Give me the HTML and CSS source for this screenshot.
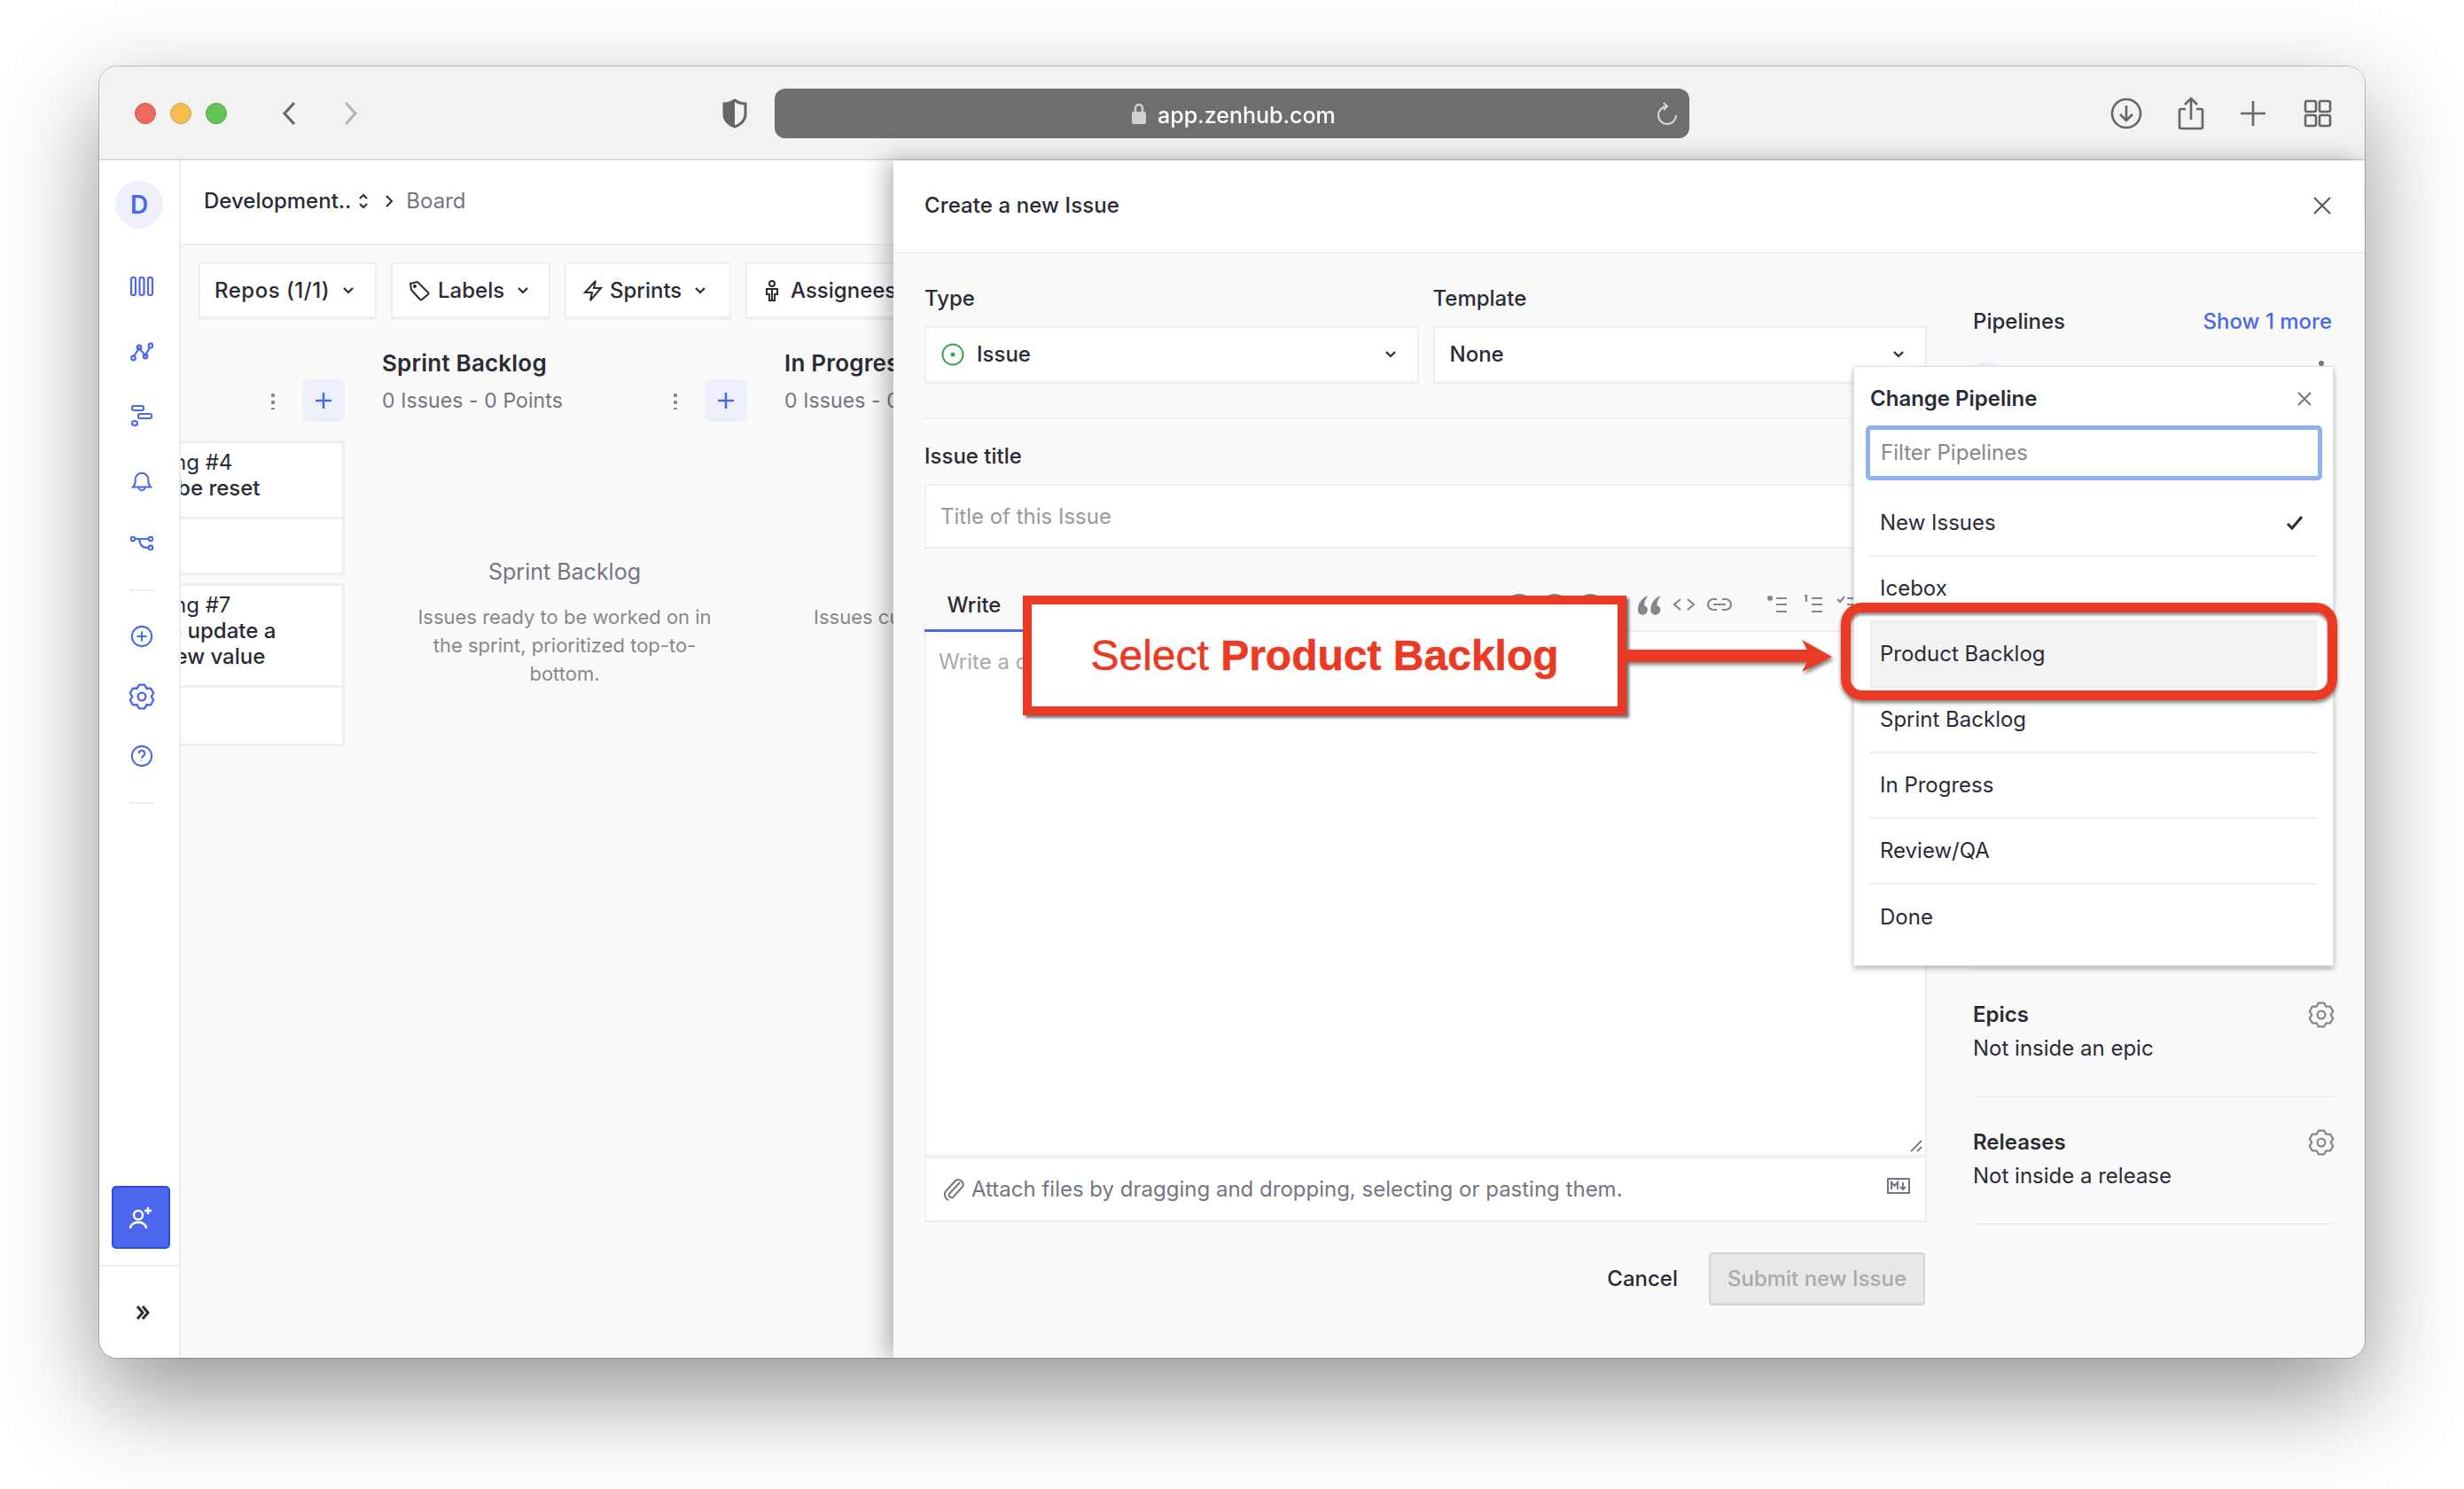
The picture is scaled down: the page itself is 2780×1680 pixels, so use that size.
FILE: index.html
```html
<!DOCTYPE html>
<html lang="en">

<head>
    <meta charset="UTF-8">
    <meta name="viewport" content="width=device-width, initial-scale=1.0">
    <title>Create a new Issue - ZenHub</title>
    <link rel="stylesheet" href="styles.css">
</head>

<body>
    <div class="window">
        <header class="titlebar">
            <span class="light light-red"></span>
            <span class="light light-yellow"></span>
            <span class="light light-green"></span>
            <svg class="nav-back" width="18" height="28" viewBox="0 0 18 28"><path d="M15 2 L4 14 L15 26" /></svg>
            <svg class="nav-forward" width="18" height="28" viewBox="0 0 18 28"><path d="M3 2 L14 14 L3 26" /></svg>
            <svg class="shield" width="28" height="34" viewBox="0 0 28 34">
                <path class="shield-fill" d="M14 2 C10 5 6 6 2 6 V18 C2 25 8 30 14 32 Z" />
                <path class="shield-line" d="M14 2 C10 5 6 6 2 6 V18 C2 25 8 30 14 32 C20 30 26 25 26 18 V6 C22 6 18 5 14 2 Z" />
            </svg>
            <div class="urlbar">
                <svg class="lock" width="16" height="24" viewBox="0 0 16 24">
                    <path d="M4 11 V6 a4 4 0 0 1 8 0 V11" />
                    <rect x="0" y="10" width="16" height="14" rx="2" />
                </svg>
                <span class="url-text">app.zenhub.com</span>
                <svg class="reload" width="26" height="28" viewBox="0 0 26 28">
                    <path d="M13 6 A10 10 0 1 0 23 16" />
                    <path d="M9 2 L13 6 L9 10" />
                </svg>
            </div>
            <div class="toolbar-right">
                <svg width="36" height="36" viewBox="0 0 36 36"><circle cx="18" cy="18" r="16" /><path d="M18 9 V26 M11 19 L18 26 L25 19" /></svg>
                <svg width="30" height="38" viewBox="0 0 30 38"><path d="M9 14 H4 a2 2 0 0 0 -2 2 V34 a2 2 0 0 0 2 2 H26 a2 2 0 0 0 2 -2 V16 a2 2 0 0 0 -2 -2 H21 M15 26 V2 M8 9 L15 2 L22 9" /></svg>
                <svg width="30" height="30" viewBox="0 0 30 30"><path d="M15 1 V29 M1 15 H29" /></svg>
                <svg width="32" height="32" viewBox="0 0 32 32"><rect x="2" y="2" width="12" height="12" rx="2" /><rect x="18" y="2" width="12" height="12" rx="2" /><rect x="2" y="18" width="12" height="12" rx="2" /><rect x="18" y="18" width="12" height="12" rx="2" /></svg>
            </div>
        </header>

        <div class="app">
            <nav class="sidebar">
                <div class="avatar">D</div>
                <svg class="side-icon icon-board" width="28" height="22" viewBox="0 0 28 22"><rect x="2" y="1" width="5" height="20" rx="2" /><rect x="11.5" y="1" width="5" height="20" rx="2" /><rect x="21" y="1" width="5" height="20" rx="2" /></svg>
                <svg class="side-icon icon-graph" width="26" height="22" viewBox="0 0 26 22"><path d="M4 16 L10 7 L17 15 L22 6" /><circle cx="3.5" cy="18" r="2.3" /><circle cx="10" cy="6" r="2.3" /><circle cx="17" cy="16" r="2.3" /><circle cx="23" cy="4" r="2.3" /></svg>
                <svg class="side-icon icon-tree" width="24" height="24" viewBox="0 0 24 24"><rect x="1" y="1" width="13" height="5" rx="2" /><rect x="8" y="10" width="15" height="5" rx="2" /><rect x="1" y="18" width="6" height="5" rx="2.5" /></svg>
                <svg class="side-icon icon-bell" width="24" height="24" viewBox="0 0 26 26"><path d="M2 19 C5 16 5 14 5 10 a8 8 0 0 1 16 0 C21 14 21 16 24 19 Z M9 19 a4 4 0 0 0 8 0" /></svg>
                <svg class="side-icon icon-branch" width="26" height="16" viewBox="0 0 26 16"><circle cx="3" cy="3" r="2.3" /><circle cx="23" cy="3" r="2.3" /><circle cx="23" cy="13" r="2.3" /><path d="M5.500 3 H20.500 M10 3 C11 10 13 13 20.500 13" /></svg>
                <span class="side-rule rule-tools"></span>
                <svg class="side-icon icon-plus" width="26" height="26" viewBox="0 0 28 28"><circle cx="14" cy="14" r="12" /><path d="M14 8 V20 M8 14 H20" /></svg>
                <svg class="side-icon icon-gear" width="30" height="30" viewBox="0 0 24 24"><polygon points="9.53,1.28 14.47,1.28 16.3,4.55 20.04,4.5 22.52,8.79 20.6,12 22.52,15.21 20.04,19.5 16.3,19.45 14.47,22.72 9.53,22.72 7.7,19.45 3.96,19.5 1.48,15.21 3.4,12 1.48,8.79 3.96,4.5 7.7,4.55" /><circle cx="12" cy="12" r="3.5" /></svg>
                <svg class="side-icon icon-help" width="26" height="26" viewBox="0 0 28 28"><circle cx="14" cy="14" r="12" /><path d="M10.500 11 a3.500 3.500 0 1 1 5 3 C14.500 15 14 15.500 14 17 M14 20 V20.500" /></svg>
                <span class="side-rule rule-help"></span>
                <div class="invite">
                    <svg width="28" height="28" viewBox="0 0 28 28"><circle cx="11" cy="11" r="5" /><path d="M2 26 a9 7 0 0 1 18 0 M18 6 H26 M22 2 V10" /></svg>
                </div>
                <div class="expand">
                    <svg width="16" height="16" viewBox="0 0 16 16"><path d="M2 1 L8 8 L2 15 M8 1 L14 8 L8 15" /></svg>
                </div>
            </nav>

            <main class="board">
                <div class="crumbs">
                    <span class="crumb-main">Development..</span>
                    <svg class="updown" width="12" height="18" viewBox="0 0 12 18"><path d="M2 6 L6 2 L10 6 M2 12 L6 16 L10 12" /></svg>
                    <svg class="crumb-sep" width="10" height="16" viewBox="0 0 10 16"><path d="M2 2 L8 8 L2 14" /></svg>
                    <span class="crumb-page">Board</span>
                </div>
                <div class="filters">
                    <button class="filter filter-repos"><span class="repos-label">Repos (1/1)</span><svg class="chev" width="12" height="8" viewBox="0 0 12 8"><path d="M1 1 L6 6 L11 1" /></svg></button>
                    <button class="filter filter-labels">
                        <svg class="filter-icon" width="24" height="24" viewBox="0 0 24 24"><path d="M2 4 L10 2 L22 14 Q23 15 22 16 L15 22 Q14 23 13 22 L3 11 Z" /><circle cx="7" cy="7" r="1" /></svg>
                        Labels<svg class="chev" width="12" height="8" viewBox="0 0 12 8"><path d="M1 1 L6 6 L11 1" /></svg>
                    </button>
                    <button class="filter filter-sprints">
                        <svg class="filter-icon" width="24" height="26" viewBox="0 0 24 26"><path d="M15 2 L3 15 H11 L9 24 L21 10 H13 Z" /></svg>
                        Sprints<svg class="chev" width="12" height="8" viewBox="0 0 12 8"><path d="M1 1 L6 6 L11 1" /></svg>
                    </button>
                    <button class="filter filter-assignees">
                        <svg class="filter-icon" width="16" height="24" viewBox="0 0 16 24"><circle cx="8" cy="4" r="3" /><path d="M2 10 H14 V16 H11 V23 H5 V16 H2 Z M8 10 V23" /></svg>
                        Assignees
                    </button>
                </div>
                <div class="columns">
                    <section class="column">
                        <div class="col-title">Product Backlog</div>
                        <div class="col-meta">
                            <span class="col-count">2 Issues - 0 Points</span>
                            <span class="dots"></span>
                            <span class="add-btn"><svg width="20" height="20" viewBox="0 0 20 20"><path d="M10 1 V19 M1 10 H19" /></svg></span>
                        </div>
                        <article class="card">
                            <div class="card-body">
                                <p class="card-repo">Typing #4</p>
                                <p>Can be reset</p>
                            </div>
                            <div class="card-foot"></div>
                        </article>
                        <article class="card">
                            <div class="card-body">
                                <p class="card-repo">Typing #7</p>
                                <p>Fit to update a<br>fix new value</p>
                            </div>
                            <div class="card-foot"></div>
                        </article>
                    </section>
                    <section class="column">
                        <div class="col-title">Sprint Backlog</div>
                        <div class="col-meta">
                            <span class="col-count">0 Issues - 0 Points</span>
                            <span class="dots"></span>
                            <span class="add-btn"><svg width="20" height="20" viewBox="0 0 20 20"><path d="M10 1 V19 M1 10 H19" /></svg></span>
                        </div>
                        <div class="empty">
                            <h3 class="empty-title">Sprint Backlog</h3>
                            <p class="empty-text">Issues ready to be worked on in the sprint, prioritized top-to-bottom.</p>
                        </div>
                    </section>
                    <section class="column">
                        <div class="col-title">In Progress</div>
                        <div class="col-meta">
                            <span class="col-count">0 Issues - 0 Points</span>
                            <span class="dots"></span>
                            <span class="add-btn"><svg width="20" height="20" viewBox="0 0 20 20"><path d="M10 1 V19 M1 10 H19" /></svg></span>
                        </div>
                        <div class="empty">
                            <h3 class="empty-title">In Progress</h3>
                            <p class="empty-text">Issues currently being worked on by the team</p>
                        </div>
                    </section>
                </div>
            </main>

            <div class="modal">
                <div class="modal-head">
                    <span>Create a new Issue</span>
                    <svg width="22" height="22" viewBox="0 0 22 22"><path d="M2 2 L20 20 M20 2 L2 20" /></svg>
                </div>
                <div class="modal-body">
                    <form class="issue-form">
                        <div class="field-row">
                            <div class="field">
                                <label class="field-label">Type</label>
                                <div class="select">
                                    <svg class="issue-icon" width="26" height="26" viewBox="0 0 26 26"><circle class="issue-ring" cx="13" cy="13" r="11.500" /><circle class="issue-dot" cx="13" cy="13" r="2.500" /></svg>
                                    <span class="select-value">Issue</span>
                                    <svg class="chev" width="12" height="8" viewBox="0 0 12 8"><path d="M1 1 L6 6 L11 1" /></svg>
                                </div>
                            </div>
                            <div class="field">
                                <label class="field-label">Template</label>
                                <div class="select">
                                    <span class="select-value">None</span>
                                    <svg class="chev" width="12" height="8" viewBox="0 0 12 8"><path d="M1 1 L6 6 L11 1" /></svg>
                                </div>
                            </div>
                        </div>
                        <hr class="rule">
                        <label class="field-label">Issue title</label>
                        <div class="title-input">Title of this Issue</div>
                        <div class="tabs">
                            <span class="tab-write">Write</span>
                            <div class="md-tools">
                                <span class="tool-blob"></span>
                                <span class="tool-blob"></span>
                                <span class="tool-blob tool-end"></span>
                                <svg class="tool" width="30" height="24" viewBox="2 1 24 20"><path class="tool-solid" d="M12 3 C7 6 4 10 4 16 a4.500 4.500 0 1 0 6 -4 C10 8 11 6 13 4 Z M24 3 C19 6 16 10 16 16 a4.500 4.500 0 1 0 6 -4 C22 8 23 6 25 4 Z" /></svg>
                                <svg class="tool" width="30" height="24" viewBox="0 0 30 24"><path d="M11 6 L4 12 L11 18 M19 6 L26 12 L19 18" /></svg>
                                <svg class="tool tool-end" width="30" height="24" viewBox="0 0 30 24"><path d="M12 6 H8 a6 6 0 0 0 0 12 H12 M18 6 H22 a6 6 0 0 1 0 12 H18 M8 12 H22" /></svg>
                                <svg class="tool" width="30" height="24" viewBox="0 0 30 24"><circle class="tool-solid" cx="6" cy="5" r="3" /><path d="M13 5 H25 M13 12 H25 M13 20 H25" /></svg>
                                <svg class="tool" width="30" height="24" viewBox="0 0 30 24"><path d="M5 3 L7 2 V9 M13 5 H25 M13 12 H25 M13 20 H25" /></svg>
                                <svg class="tool" width="30" height="24" viewBox="0 0 30 24"><path d="M2 6 L5 9 L10 3 M13 5 H25 M13 12 H25 M13 20 H25" /></svg>
                            </div>
                        </div>
                        <div class="editor">
                            <span class="editor-hint">Write a description</span>
                            <svg class="resize-grip" width="14" height="14" viewBox="0 0 14 14"><path d="M1 13 L13 1 M8 13 L13 8" /></svg>
                        </div>
                        <div class="attach">
                            <svg class="clip" width="26" height="26" viewBox="0 0 26 26"><path d="M20 5 L8 18 a3 3 0 0 0 4 4 L23 10 a5.500 5.500 0 0 0 -8 -7 L4 15 a7 7 0 0 0 3 10" /></svg>
                            <span class="attach-text">Attach files by dragging and dropping, selecting or pasting them.</span>
                            <svg class="md-mark" width="26" height="18" viewBox="0 0 26 18"><rect x="1" y="1" width="24" height="16" /><path d="M5 13 V5 L8.500 9 L12 5 V13 M18 5 V12 M15 10 L18 13 L21 10" /></svg>
                        </div>
                        <div class="form-actions">
                            <span class="cancel">Cancel</span>
                            <button class="submit" type="button">Submit new Issue</button>
                        </div>
                    </form>

                    <aside class="details">
                        <section class="pipelines">
                            <div class="pipelines-head">
                                <span class="detail-title">Pipelines</span>
                                <span class="show-more">Show 1 more</span>
                            </div>
                            <div class="pipeline-row">
                                <span class="pipeline-avatar"></span>
                                <span class="pipeline-dot"></span>
                            </div>
                        </section>
                        <section class="detail-block">
                            <div class="detail-head">
                                <span class="detail-title">Epics</span>
                                <svg class="gear" width="30" height="30" viewBox="0 0 24 24"><polygon points="9.53,1.28 14.47,1.28 16.3,4.55 20.04,4.5 22.52,8.79 20.6,12 22.52,15.21 20.04,19.5 16.3,19.45 14.47,22.72 9.53,22.72 7.7,19.45 3.96,19.5 1.48,15.21 3.4,12 1.48,8.79 3.96,4.5 7.7,4.55" /><circle cx="12" cy="12" r="3.5" /></svg>
                            </div>
                            <p class="detail-text">Not inside an epic</p>
                        </section>
                        <section class="detail-block">
                            <div class="detail-head">
                                <span class="detail-title">Releases</span>
                                <svg class="gear" width="30" height="30" viewBox="0 0 24 24"><polygon points="9.53,1.28 14.47,1.28 16.3,4.55 20.04,4.5 22.52,8.79 20.6,12 22.52,15.21 20.04,19.5 16.3,19.45 14.47,22.72 9.53,22.72 7.7,19.45 3.96,19.5 1.48,15.21 3.4,12 1.48,8.79 3.96,4.5 7.7,4.55" /><circle cx="12" cy="12" r="3.5" /></svg>
                            </div>
                            <p class="detail-text">Not inside a release</p>
                        </section>
                    </aside>
                </div>

                <div class="dropdown">
                    <div class="dropdown-head">
                        <span>Change Pipeline</span>
                        <svg width="16" height="16" viewBox="0 0 16 16"><path d="M1 1 L15 15 M15 1 L1 15" /></svg>
                    </div>
                    <div class="filter-input">Filter Pipelines</div>
                    <ul class="pipeline-list">
                        <li class="pipeline-item">New Issues
                            <svg width="20" height="18" viewBox="0 0 20 18"><path d="M2 10 L7 15 L18 2" /></svg>
                        </li>
                        <li class="pipeline-item">Icebox</li>
                        <li class="pipeline-item pipeline-active">Product Backlog</li>
                        <li class="pipeline-item">Sprint Backlog</li>
                        <li class="pipeline-item">In Progress</li>
                        <li class="pipeline-item">Review/QA</li>
                        <li class="pipeline-item pipeline-last">Done</li>
                    </ul>
                </div>

                <!-- red annotations on top of the screenshot -->
                <div class="note"><span>Select <b>Product Backlog</b></span></div>
                <svg class="note-arrow" width="236" height="40" viewBox="0 0 236 40"><path d="M0 13 H204 L198 2 L232 21 L198 38 L204 27 H0 Z" /></svg>
                <div class="note-ring"></div>
            </div>
        </div>
    </div>
</body>

</html>
```
FILE: styles.css
```css
* {
    box-sizing: border-box;
}

html,
body {
    margin: 0;
    background: #fff;
}

body {
    height: 1680px;
    padding: 75px 112px 148px;
    overflow: hidden;
    font-family: Inter, "Noto Sans", sans-serif;
    font-size: 24px;
    line-height: 30px;
    color: #2a2b36;
}

p,
h3,
ul {
    margin: 0;
    padding: 0;
}

svg {
    display: block;
    flex: none;
    fill: none;
    stroke: currentColor;
}

/* window */
.window {
    display: flex;
    flex-direction: column;
    height: 1457px;
    border-radius: 20px;
    overflow: hidden;
    box-shadow: 0 0 0 1px rgba(0, 0, 0, 0.22);
    filter: drop-shadow(0 42px 55px rgba(0, 0, 0, 0.42));
}

.titlebar {
    display: flex;
    align-items: center;
    height: 106px;
    padding: 2px 37px 0 40px;
    background: #f2f2f2;
    border-bottom: 2px solid #d9d9d9;
    color: #666;
}

.light {
    width: 24px;
    height: 24px;
    margin-right: 16px;
    border-radius: 50%;
}

.light-red {
    background: #ee6a5f;
    border: 1px solid #d5544a;
}

.light-yellow {
    background: #f5bd4f;
    border: 1px solid #d6a13e;
}

.light-green {
    background: #61c454;
    border: 1px solid #52a845;
}

.nav-back {
    margin-left: 45px;
    stroke-width: 3;
}

.nav-forward {
    margin-left: 52px;
    stroke-width: 3;
    color: #b3b3b3;
}

.shield {
    margin-left: 410px;
}

.shield-fill {
    fill: #666;
    stroke: none;
}

.shield-line {
    stroke: #666;
    stroke-width: 3;
}

.urlbar {
    display: flex;
    align-items: center;
    width: 1032px;
    height: 56px;
    margin-left: 31px;
    padding: 0 12px 0 403px;
    border-radius: 12px;
    background: #6e6e6e;
    color: #fff;
}

.lock {
    fill: #d0d0d0;
    stroke: none;
}

.lock path {
    fill: none;
    stroke: #d0d0d0;
    stroke-width: 2.5;
}

.url-text {
    margin: 4px 0 0 13px;
    font-size: 25px;
    font-weight: 500;
}

.reload {
    margin-left: auto;
    stroke: #d8d8d8;
    stroke-width: 2;
}

.toolbar-right {
    display: flex;
    align-items: center;
    gap: 40px;
    margin-left: auto;
}

.toolbar-right svg {
    stroke-width: 2.6;
}

.toolbar-right svg:last-child {
    margin-left: 2px;
}

/* app layout */
.app {
    display: flex;
    flex: 1;
    position: relative;
    min-height: 0;
    background: #fff;
}

.sidebar {
    display: flex;
    flex-direction: column;
    align-items: center;
    flex: none;
    width: 92px;
    border-right: 2px solid #ededed;
    color: #4a67ee;
}

.avatar {
    width: 54px;
    height: 54px;
    margin-top: 23px;
    border-radius: 50%;
    background: #eef0fd;
    font-size: 28px;
    font-weight: 600;
    line-height: 54px;
    text-align: center;
}

.side-icon {
    margin-left: 6px;
    stroke-width: 2.2;
}

.icon-board {
    margin-top: 54px;
}

.icon-graph {
    margin-top: 52px;
}

.icon-tree {
    margin-top: 49px;
}

.icon-bell {
    margin-top: 51px;
}

.icon-branch {
    margin-top: 49px;
}

.icon-plus {
    margin-top: 38px;
}

.icon-gear {
    margin-top: 40px;
    stroke-width: 1.9;
}

.icon-help {
    margin-top: 39px;
}

.side-rule {
    width: 28px;
    height: 2px;
    margin-left: 5px;
    background: #ededed;
}

.rule-tools {
    margin-top: 44px;
}

.rule-help {
    margin-top: 39px;
}

.invite {
    display: flex;
    align-items: center;
    justify-content: center;
    width: 66px;
    height: 71px;
    margin: auto 0 0 4px;
    border: 2px solid #2f4bd8;
    border-radius: 5px;
    background: #4a67ee;
    color: #fff;
}

.invite svg {
    stroke-width: 2.5;
}

.expand {
    display: flex;
    align-items: center;
    justify-content: center;
    align-self: stretch;
    height: 105px;
    margin-top: 18px;
    border-top: 2px solid #ededed;
    color: #2a2b36;
}

.expand svg {
    margin-left: 7px;
    stroke-width: 3;
}

/* board behind the modal */
.board {
    flex: none;
    width: 804px;
    overflow: hidden;
    background: #fafafa;
}

.crumbs {
    display: flex;
    align-items: center;
    height: 96px;
    padding: 0 0 2px 26px;
    border-bottom: 2px solid #eee;
    background: #fff;
    font-weight: 500;
}

.crumb-main {
    white-space: nowrap;
}

.updown {
    margin-left: 8px;
    stroke-width: 2;
}

.crumb-sep {
    margin-left: 18px;
    stroke-width: 2;
}

.crumb-page {
    margin-left: 14px;
    color: #757580;
    font-weight: 400;
}

.filters {
    display: flex;
    gap: 16px;
    padding: 19px 0 0 20px;
}

.filter {
    display: flex;
    align-items: center;
    flex: none;
    height: 65px;
    padding: 1px 0 0 16px;
    border: 2px solid #eee;
    border-bottom-width: 4px;
    border-radius: 3px;
    background: #fff;
    color: #2a2b36;
    font: 500 24px/30px Inter, "Noto Sans", sans-serif;
    white-space: nowrap;
}

.repos-label {
    letter-spacing: 0.5px;
}

.filter-repos {
    width: 201px;
}

.filter-labels {
    width: 180px;
    padding-left: 18px;
}

.filter-sprints {
    width: 188px;
    padding-left: 18px;
}

.filter-assignees {
    width: 240px;
    padding-left: 20px;
}

.filter-icon {
    margin-right: 7px;
    stroke-width: 2;
}

.filter-labels .filter-icon {
    margin-right: 9px;
}

.filter-assignees .filter-icon {
    margin-right: 13px;
}

.filter .chev {
    margin-left: 15px;
}

.chev {
    stroke-width: 2.2;
}

.columns {
    display: flex;
    gap: 42px;
    margin-left: -227px;
    padding-top: 34px;
}

.column {
    flex: none;
    width: 412px;
}

.col-title {
    font-size: 26px;
    font-weight: 600;
    letter-spacing: 0.2px;
    white-space: nowrap;
}

.col-meta {
    display: flex;
    align-items: center;
    height: 48px;
    margin-top: 3px;
}

.col-count {
    color: #757580;
    font-size: 23px;
    letter-spacing: 0.1px;
}

.dots {
    width: 4px;
    height: 20px;
    margin-left: auto;
    margin-right: 31px;
    background: radial-gradient(circle, #888 2px, transparent 2.5px) 0 0 / 4px 8px;
}

.add-btn {
    display: flex;
    align-items: center;
    justify-content: center;
    width: 48px;
    height: 48px;
    border-radius: 6px;
    background: #eef0fd;
    color: #4a67ee;
}

.add-btn svg {
    stroke-width: 2.5;
}

.card {
    margin: 21px 0 -12px;
    border: 3px solid #eee;
    border-radius: 3px;
    background: #fff;
}

.card-body {
    padding: 7px 10px 18px 168px;
    border-bottom: 3px solid #eee;
    font-weight: 500;
    line-height: 29px;
    white-space: nowrap;
}

.card-repo {
    font-weight: 400;
}

.card-foot {
    height: 60px;
}

.card + .card .card-foot {
    height: 63px;
}

.empty {
    margin-top: 154px;
    text-align: center;
    color: #757580;
}

.empty-title {
    font-size: 25px;
    font-weight: 400;
}

.empty-text {
    width: 350px;
    margin: 20px auto 0;
    color: #888;
    font-size: 22px;
    line-height: 32px;
}

/* modal */
.modal {
    display: flex;
    flex-direction: column;
    flex: 1;
    position: relative;
    min-width: 0;
    background: #fafafa;
    box-shadow: -8px 0 24px rgba(0, 0, 0, 0.28);
}

.modal-head {
    display: flex;
    align-items: center;
    justify-content: space-between;
    flex: none;
    height: 105px;
    padding: 0 37px 1px 35px;
    border-bottom: 2px solid #eee;
    background: #fff;
    font-weight: 500;
    letter-spacing: 0.1px;
}

.modal-head svg {
    stroke-width: 2;
    color: #555;
}

.modal-body {
    display: flex;
    flex: 1;
    gap: 52px;
    padding: 0 34px 0 35px;
}

.issue-form {
    flex: none;
    width: 1131px;
    padding-top: 36px;
}

.field-row {
    display: flex;
    gap: 16px;
}

.field {
    flex: 1;
}

.field-label {
    display: block;
    margin-bottom: 16px;
    font-weight: 500;
}

.select {
    display: flex;
    align-items: center;
    height: 66px;
    padding: 0 24px 0 17px;
    border: 2px solid #eee;
    border-bottom-width: 4px;
    background: #fff;
}

.select .chev {
    margin-left: auto;
}

.select-value {
    font-weight: 500;
}

.issue-icon {
    margin-right: 14px;
}

.issue-ring {
    stroke: #3fa34d;
    stroke-width: 2;
}

.issue-dot {
    fill: #3fa34d;
    stroke: none;
}

.rule {
    height: 2px;
    margin: 37px 0 27px;
    border: 0;
    background: #eee;
}

.title-input {
    display: flex;
    align-items: center;
    height: 73px;
    padding-left: 16px;
    border: 2px solid #eee;
    background: #fff;
    color: #999;
}

.tabs {
    display: flex;
    align-items: flex-end;
    height: 58px;
    margin-top: 36px;
    border-bottom: 2px solid #eee;
}

.tab-write {
    width: 112px;
    height: 58px;
    margin-bottom: -2px;
    padding-top: 13px;
    border-bottom: 3px solid #4a67ee;
    font-weight: 500;
    text-align: center;
}

.md-tools {
    display: flex;
    align-self: center;
    gap: 10px;
    margin-left: auto;
    margin-top: -2px;
    padding-right: 73px;
    color: #85858f;
}

.tool {
    stroke-width: 2.2;
}

.tool-solid {
    fill: #85858f;
    stroke: none;
}

.tool-end {
    margin-right: 26px;
}

.tool-blob {
    width: 30px;
    height: 24px;
    border-radius: 50%;
    background: #85858f;
}

.editor {
    display: flex;
    height: 592px;
    position: relative;
    padding: 19px 14px;
    border: 2px solid #eee;
    border-top: 0;
    background: #fff;
    color: #aaa;
}

.resize-grip {
    position: absolute;
    right: 3px;
    bottom: 3px;
    color: #555;
    stroke-width: 1.5;
}

.attach {
    display: flex;
    align-items: center;
    height: 74px;
    padding: 0 17px 0 18px;
    border: 2px solid #eee;
    background: #fff;
    color: #757580;
}

.clip {
    stroke-width: 2;
}

.attach-text {
    margin-left: 7px;
    font-size: 24px;
}

.md-mark {
    margin-left: auto;
    margin-top: -8px;
    stroke-width: 2;
}

.form-actions {
    display: flex;
    align-items: center;
    justify-content: flex-end;
    gap: 35px;
    margin-top: 34px;
    padding-right: 2px;
}

.cancel {
    font-weight: 500;
}

.submit {
    width: 244px;
    height: 60px;
    padding: 0;
    border: 2px solid #d5d5d5;
    border-bottom-width: 3px;
    border-radius: 4px;
    background: #e8e8e8;
    color: #aaa;
    font: 500 24px/30px Inter, "Noto Sans", sans-serif;
}

/* right column */
.details {
    flex: 1;
    min-width: 0;
    padding-top: 62px;
}

.pipelines {
    height: 746px;
    border-bottom: 2px solid #eee;
}

.pipelines-head,
.detail-head {
    display: flex;
    align-items: center;
    justify-content: space-between;
    height: 30px;
}

.detail-title {
    font-weight: 600;
}

.pipelines-head .detail-title {
    font-weight: 500;
}

.show-more {
    margin-right: 3px;
    color: #4a67ee;
    font-weight: 500;
}

.pipeline-row {
    display: flex;
    justify-content: space-between;
    margin-top: 29px;
    padding: 0 12px 0 1px;
}

.pipeline-avatar {
    width: 28px;
    height: 28px;
    border-radius: 50%;
    background: #eef0fd;
}

.pipeline-dot {
    width: 6px;
    height: 6px;
    border-radius: 50%;
    background: #777;
}

.detail-block {
    height: 144px;
    padding-top: 36px;
    border-bottom: 2px solid #eee;
}

.detail-text {
    margin-top: 8px;
    font-size: 24px;
}

.gear {
    color: #85858f;
    stroke-width: 1.8;
}

/* pipeline dropdown */
.dropdown {
    position: absolute;
    left: 1083px;
    top: 232px;
    width: 542px;
    height: 677px;
    padding: 21px 18px 0;
    border: 1px solid #e2e2e2;
    background: #fff;
    box-shadow: 0 3px 6px rgba(0, 0, 0, 0.28);
}

.dropdown-head {
    display: flex;
    align-items: center;
    justify-content: space-between;
    height: 30px;
    margin-bottom: 15px;
    font-weight: 600;
}

.dropdown-head svg {
    margin-right: 6px;
    color: #777;
    stroke-width: 2;
}

.filter-input {
    display: flex;
    align-items: center;
    height: 62px;
    margin: 0 -6px 12px -5px;
    padding-left: 12px;
    border: 5px solid #8fb1f0;
    border-radius: 5px;
    color: #888;
}

.pipeline-list {
    list-style: none;
}

.pipeline-item {
    display: flex;
    align-items: center;
    justify-content: space-between;
    height: 74px;
    padding: 0 15px 0 11px;
    border-bottom: 2px solid #eee;
}

.pipeline-item svg {
    stroke-width: 3;
}

.pipeline-active {
    height: 76px;
    margin-top: -2px;
    padding-left: 9px;
    border: 2px solid #eee;
    background: #f3f3f3;
}

.pipeline-last {
    border-bottom: 0;
}

/* annotations */
.note {
    display: flex;
    align-items: center;
    justify-content: center;
    position: absolute;
    left: 146px;
    top: 491px;
    width: 681px;
    height: 135px;
    border: 10px solid #ea3a24;
    background: #fff;
    box-shadow: 3px 3px 3px rgba(0, 0, 0, 0.55);
    color: #ea3a24;
    font-family: "Liberation Sans", Arial, sans-serif;
    font-size: 48px;
    line-height: 56px;
    -webkit-text-stroke: 0.5px #ea3a24;
}

.note-arrow {
    position: absolute;
    left: 827px;
    top: 539px;
    fill: #ea3a24;
    stroke: none;
    filter: drop-shadow(2px 3px 2px rgba(0, 0, 0, 0.5));
}

.note-ring {
    position: absolute;
    left: 1069px;
    top: 499px;
    width: 560px;
    height: 110px;
    border: 11px solid #ea3a24;
    border-radius: 24px;
    box-shadow: 0 3px 4px rgba(0, 0, 0, 0.5), inset 0 3px 3px rgba(0, 0, 0, 0.45);
}
```
